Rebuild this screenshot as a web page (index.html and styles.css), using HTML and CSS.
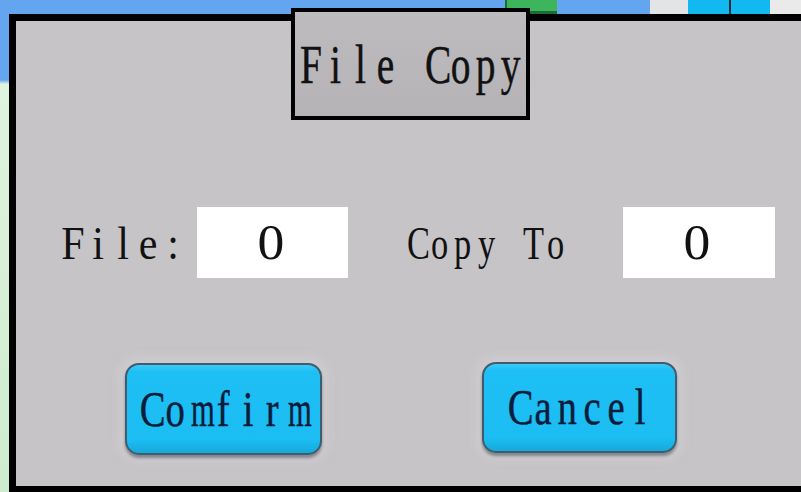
FILE: index.html
```html
<!DOCTYPE html>
<html>
<head>
<meta charset="utf-8">
<link rel="stylesheet" href="styles.css">
</head>
<body>
<div class="page">
  <div class="topbar">
    <div class="seg seg-blue1"></div>
    <div class="seg seg-green"></div>
    <div class="seg seg-blue2"></div>
    <div class="seg seg-light1"></div>
    <div class="seg seg-cyan1"></div>
    <div class="seg seg-dark"></div>
    <div class="seg seg-cyan2"></div>
    <div class="seg seg-light2"></div>
  </div>
  <div class="main">
    <div class="side"></div>
    <div class="dialog">
      <div class="title"><span class="w w-title"><span class="c">F</span><span class="c">i</span><span class="c">l</span><span class="c">e</span><span class="c"> </span><span class="c">C</span><span class="c">o</span><span class="c">p</span><span class="c">y</span></span></div>
      <div class="fields">
        <div class="label label-file"><span class="w w-file"><span class="c">F</span><span class="c">i</span><span class="c">l</span><span class="c">e</span><span class="c">:</span></span></div>
        <div class="input input-file"><span class="digit">0</span></div>
        <div class="label label-copy"><span class="w w-copy"><span class="c">C</span><span class="c">o</span><span class="c">p</span><span class="c">y</span><span class="c"> </span><span class="c">T</span><span class="c">o</span></span></div>
        <div class="input input-copy"><span class="digit">0</span></div>
      </div>
      <div class="actions">
        <div class="btn btn-confirm"><span class="w w-btn"><span class="c">C</span><span class="c">o</span><span class="c c-m">m</span><span class="c">f</span><span class="c">i</span><span class="c">r</span><span class="c c-m">m</span></span></div>
        <div class="btn btn-cancel"><span class="w w-btn"><span class="c">C</span><span class="c">a</span><span class="c">n</span><span class="c">c</span><span class="c">e</span><span class="c">l</span></span></div>
      </div>
    </div>
  </div>
</div>
</body>
</html>
```
FILE: styles.css
```css
html, body {
  margin: 0;
  padding: 0;
}
body {
  width: 801px;
  height: 492px;
  overflow: hidden;
  background: #d6efd6;
  font-family: "Liberation Serif", "Times New Roman", serif;
}
.page {
  width: 801px;
  height: 492px;
  display: flex;
  flex-direction: column;
}
.topbar {
  height: 14px;
  display: flex;
  flex: none;
}
.seg { height: 100%; flex: none; }
.seg-blue1 { width: 505px; background: #63a5ef; }
.seg-green { width: 52px; background: #3db55c; box-shadow: inset 0 -3px 0 #1f6b35, inset 2px 0 0 #1f6b35; }
.seg-blue2 { width: 93px; background: #63a5ef; }
.seg-light1 { width: 38px; background: #e2e4e6; }
.seg-cyan1 { width: 41px; background: #12b9f0; }
.seg-dark { width: 2px; background: #1a2a3a; }
.seg-cyan2 { width: 39px; background: #12b9f0; }
.seg-light2 { width: 31px; background: #eaeaea; }

.main {
  display: flex;
  flex: none;
}
.side {
  width: 9px;
  flex: none;
  height: 478px;
  background: linear-gradient(to bottom, #63a5ef 0, #63a5ef 66px, #dff3df 70px, #cdeccd 100%);
}
.dialog {
  flex: none;
  width: 800px;
  height: 479px;
  box-sizing: border-box;
  border: 7px solid #000;
  border-right: none;
  background: #c6c4c7;
  display: flex;
  flex-direction: column;
}

/* monospaced character cells */
.w {
  display: flex;
  line-height: 1;
  white-space: pre;
}
.c {
  display: block;
  flex: none;
  text-align: center;
}
.w-title { font-size: 47px; -webkit-text-stroke: 0.4px currentColor; }
.w-title .c { width: 25px; transform: scale(0.84, 1.18); }
.w-file { font-size: 42px; }
.w-file .c { width: 25px; transform: scaleY(1.12); }
.w-copy { font-size: 42px; }
.w-copy .c { width: 23.2px; transform: scale(0.82, 1.12); }
.w-btn { font-size: 45px; -webkit-text-stroke: 0.4px currentColor; }
.w-btn .c { width: 24.4px; transform: scale(0.86, 1.11); }
.w-btn .c-m { transform: scale(0.68, 1.11); }

.title {
  margin-top: -13px;
  margin-left: 275px;
  width: 239px;
  height: 112px;
  box-sizing: border-box;
  border: 4px solid #000;
  background: linear-gradient(to bottom, #bdbbbe, #b5b3b6);
  display: flex;
  align-items: center;
  justify-content: center;
  color: #111;
}
.fields {
  margin-top: 87px;
  height: 71px;
  display: flex;
  align-items: center;
}
.label {
  color: #111;
  flex: none;
}
.label-file { margin-left: 44.5px; }
.label-copy { margin-left: 57px; }
.input {
  flex: none;
  height: 71px;
  background: #fff;
  display: flex;
  align-items: center;
  justify-content: center;
  color: #111;
}
.input-file { margin-left: 11.5px; width: 151px; }
.input-copy { margin-left: 55.6px; width: 152px; }
.digit {
  display: block;
  font-size: 44px;
  line-height: 1;
  margin-right: 3px;
  transform: scale(1.22, 1.14);
}

.actions {
  margin-top: 84px;
  display: flex;
  align-items: flex-start;
}
.btn {
  flex: none;
  box-sizing: border-box;
  border: 2px solid #3f5d6d;
  border-radius: 14px;
  background: linear-gradient(to bottom, #3ccaf8 0, #1dbff5 8%, #1bbdf3 85%, #17a9da 100%);
  box-shadow: 0 3px 3px rgba(40, 50, 60, 0.45), 0 0 10px 6px rgba(215, 212, 216, 0.55);
  display: flex;
  align-items: center;
  justify-content: center;
  color: #0c1c3a;
}
.btn-confirm { margin-left: 109px; margin-top: 1px; width: 197px; height: 92px; }
.btn-cancel { margin-left: 160px; width: 195px; height: 91px; }
```
